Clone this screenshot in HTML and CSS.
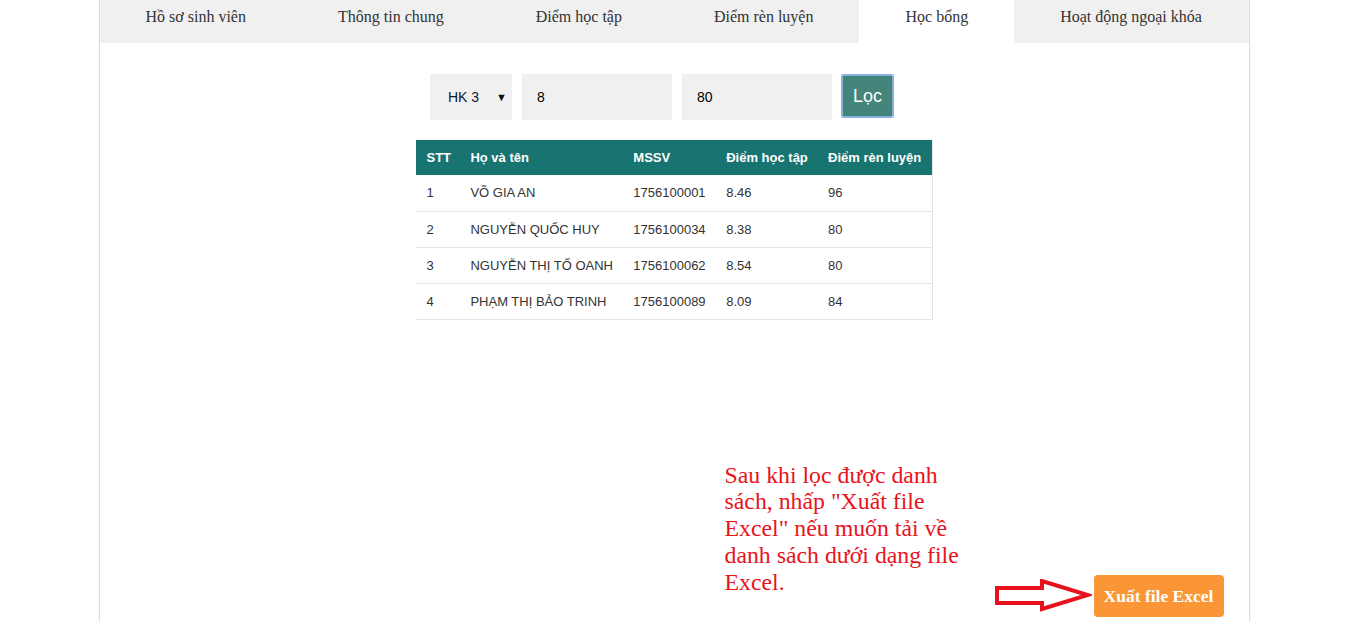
FILE: index.html
```html
<!DOCTYPE html>
<html lang="vi">
<head>
<meta charset="utf-8">
<title>Học bổng</title>
<link rel="stylesheet" href="styles.css">
</head>
<body>
<div class="page">
  <nav class="tabs">
    <a class="tab">Hồ sơ sinh viên</a>
    <a class="tab">Thông tin chung</a>
    <a class="tab">Điểm học tập</a>
    <a class="tab">Điểm rèn luyện</a>
    <a class="tab active">Học bổng</a>
    <a class="tab">Hoạt động ngoại khóa</a>
  </nav>

  <form class="filter">
    <div class="select"><span>HK 3</span><span class="caret">▼</span></div>
    <input class="field" type="text" value="8">
    <input class="field" type="text" value="80">
    <button class="btn-filter" type="button">Lọc</button>
  </form>

  <table class="list">
    <colgroup>
      <col class="c1"><col class="c2"><col class="c3"><col class="c4"><col class="c5">
    </colgroup>
    <thead>
      <tr><th>STT</th><th>Họ và tên</th><th>MSSV</th><th>Điểm học tập</th><th>Điểm rèn luyện</th></tr>
    </thead>
    <tbody>
      <tr><td>1</td><td>VÕ GIA AN</td><td>1756100001</td><td>8.46</td><td>96</td></tr>
      <tr><td>2</td><td>NGUYỄN QUỐC HUY</td><td>1756100034</td><td>8.38</td><td>80</td></tr>
      <tr><td>3</td><td>NGUYỄN THỊ TỐ OANH</td><td>1756100062</td><td>8.54</td><td>80</td></tr>
      <tr><td>4</td><td>PHẠM THỊ BẢO TRINH</td><td>1756100089</td><td>8.09</td><td>84</td></tr>
    </tbody>
  </table>

  <div class="export">
    <p class="note">Sau khi lọc được danh sách, nhấp "Xuất file Excel" nếu muốn tải về danh sách dưới dạng file Excel.</p>
    <svg class="arrow" width="97" height="34" viewBox="0 0 97 34">
      <path d="M2 9 H47 V2 L93 16 L47 30 V24 H2 Z" fill="#fff" stroke="#e8121e" stroke-width="4" stroke-linejoin="miter"/>
    </svg>
    <button class="btn-export" type="button">Xuất file Excel</button>
  </div>
</div>
</body>
</html>
```

FILE: styles.css
```css
* { box-sizing: border-box; }

html, body {
  margin: 0;
  padding: 0;
  background: #fff;
}

.page {
  width: 1151px;
  margin: 0 auto;
  min-height: 621px;
  border-left: 1px solid #dcdcdc;
  border-right: 1px solid #dcdcdc;
  box-shadow: 0 0 2px rgba(0,0,0,0.06);
}

.tabs {
  display: flex;
  background: #f0f0f0;
  height: 43px;
}

.tab {
  display: block;
  padding: 8px 46px 0;
  height: 43px;
  font-family: "Liberation Serif", "Times New Roman", serif;
  font-size: 16px;
  line-height: 18px;
  color: #333;
  white-space: nowrap;
}

.tab.active {
  background: #fff;
}

.filter {
  display: flex;
  justify-content: center;
  align-items: flex-start;
  gap: 10px;
  margin: 31px 0 0;
  padding-right: 24px;
}

.select {
  width: 82px;
  height: 46px;
  background: #f0f0f0;
  display: flex;
  align-items: center;
  justify-content: space-between;
  padding: 0 5px 0 18px;
  font-family: "Liberation Sans", Arial, sans-serif;
  font-size: 14px;
  color: #0d1a33;
}

.caret {
  font-size: 11px;
  color: #111;
}

.field {
  width: 150px;
  height: 46px;
  border: none;
  background: #f0f0f0;
  padding: 0 15px;
  font-family: "Liberation Sans", Arial, sans-serif;
  font-size: 14px;
  color: #000;
  outline: none;
}

.btn-filter {
  width: 53px;
  height: 44px;
  margin-left: -1px;
  background: #44847a;
  border: 2px solid #86aee0;
  border-radius: 3px;
  color: #fff;
  font-family: "Liberation Sans", Arial, sans-serif;
  font-size: 18px;
  padding: 0;
}

.list {
  width: 517px;
  margin: 20px auto 0;
  border-collapse: collapse;
  font-family: "Liberation Sans", Arial, sans-serif;
  font-size: 13px;
  border-right: 1px solid #dde9e8;
  border-bottom: 1px solid #dde9e8;
}

.c1 { width: 44px; }
.c2 { width: 163px; }
.c3 { width: 93px; }
.c4 { width: 102px; }
.c5 { width: 115px; }

.list th {
  background: #187470;
  color: #fff;
  font-weight: bold;
  text-align: left;
  height: 35px;
  padding: 0 0 0 11px;
  white-space: nowrap;
}

.list td {
  height: 36px;
  padding: 0 0 0 11px;
  color: #333;
  border-bottom: 1px solid #dde9e8;
  white-space: nowrap;
}

.export {
  display: flex;
  justify-content: flex-end;
  align-items: flex-end;
  margin-top: 142px;
  padding-right: 25px;
}

.note {
  width: 245px;
  margin: 0 25px 26px 0;
  font-family: "Liberation Serif", "Times New Roman", serif;
  font-size: 23.8px;
  line-height: 26.8px;
  color: #e8141c;
}

.arrow {
  display: block;
  margin: 0 2px 8px 0;
}

.btn-export {
  width: 130px;
  height: 42px;
  margin-bottom: 4px;
  background: #fb9637;
  border: none;
  border-radius: 4px;
  color: #fff;
  font-family: "Liberation Serif", "Times New Roman", serif;
  font-weight: bold;
  font-size: 17.5px;
  padding: 0;
}
```
